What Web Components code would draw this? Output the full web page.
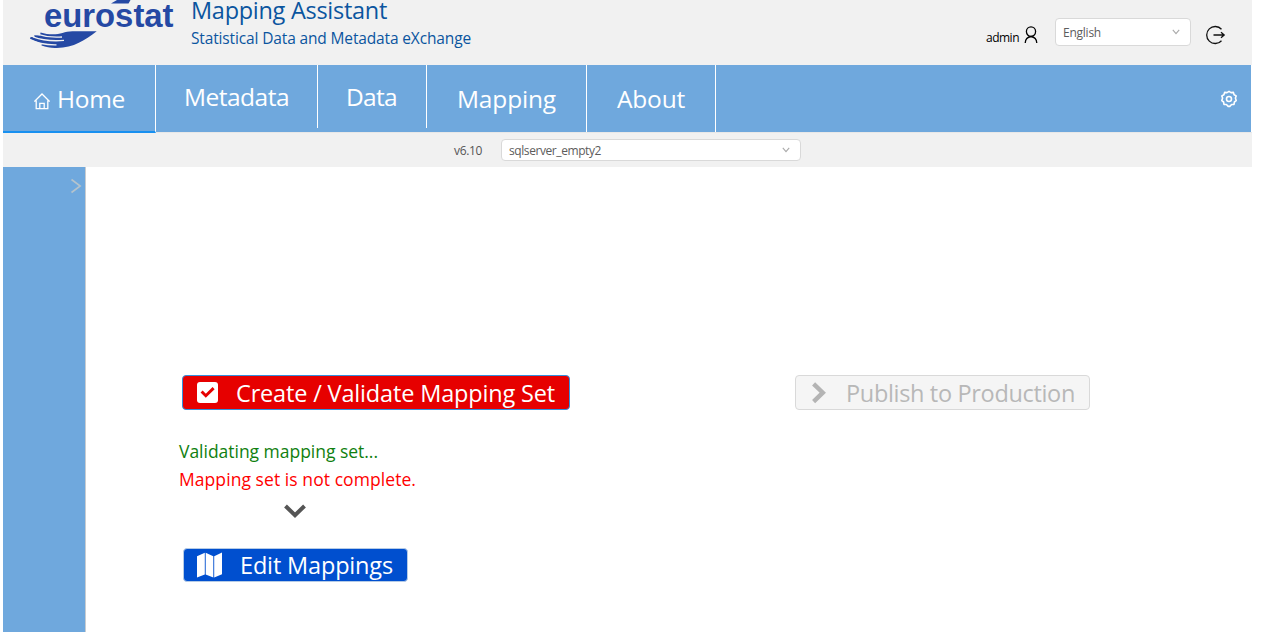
<!DOCTYPE html>
<html lang="en">
<head>
<meta charset="utf-8">
<title>Mapping Assistant</title>
<style>
html,body{margin:0;height:100%;overflow:hidden;background:#fff;font-family:"Open Sans","Noto Sans",sans-serif}
</style>
</head>
<body>
<ma-app></ma-app>
<script>
const define = (name, html, setup) => customElements.define(name, class extends HTMLElement {
  connectedCallback() {
    if (this.shadowRoot) return;
    const t = document.createElement('template');
    t.innerHTML = html;
    this.attachShadow({mode: 'open'}).append(t.content.cloneNode(true));
    if (setup) setup(this);
  }
});

/* One line of text, tracked so that it spans the requested width. */
define('fit-label', `<style>:host{display:block;flex:none;white-space:pre}span{display:inline-block}</style><span><slot></slot></span>`, el => {
  const span = el.shadowRoot.querySelector('span');
  const want = +el.getAttribute('span');
  const natural = span.getBoundingClientRect().width;
  const spacing = (want - natural) / el.textContent.length;
  span.style.letterSpacing = spacing.toFixed(3) + 'px';
  el.style.width = want + 'px';
});

const icons = {
  home: `<svg width="16" height="17" viewBox="0 0 16 17" fill="none" stroke="#fff" stroke-width="1.3"><path d="M.4 8.6 8 1l7.6 7.6M2.2 7.6v8h11.6v-8M5.8 15.6v-5.2h4.4v5.2"/></svg>`,
  user: `<svg width="14" height="18" viewBox="0 0 14 18" fill="none" stroke="#000" stroke-width="1.3"><ellipse cx="7" cy="5.6" rx="4.6" ry="4.7"/><path d="M1.2 17c.2-3.8 2.6-6 5.8-6.5 3.2.5 5.6 2.7 5.8 6.5"/></svg>`,
  exit: `<svg width="20" height="20" viewBox="0 0 20 20" fill="none" stroke="#111" stroke-width="1.3"><path d="M15.500 4.300A8.500 8.500 0 1 0 15.500 15.700M7.500 10H18M15 7.200 18.200 10 15 12.800"/></svg>`,
  gear: `<svg width="18" height="18" viewBox="0 0 18 18" fill="none" stroke="#fff" stroke-width="1.6" stroke-linejoin="round"><path d="M7 2.600 9 1.400l2 1.200 2.400-.2.700 2.300 2.100 1.200-.8 2.200L16.200 10.600l-1.800 1.400-.4 2.400-2.400.1L9.800 16.400H8.200l-1.800-1.900-2.400-.1-.4-2.400-1.800-1.400.8-2.500-.8-2.200 2.100-1.200.7-2.300z"/><circle cx="9" cy="9" r="2.500"/></svg>`,
  down: `<svg width="8" height="6" viewBox="0 0 8 6" fill="none" stroke="#aaa" stroke-width="1.1"><path d="M.8.8 4 4.7 7.2.8"/></svg>`,
  side: `<svg width="12" height="16" viewBox="0 0 12 16" fill="none" stroke="#b5c3cc" stroke-width="1.6"><path d="M1.5 1.5 10.200 8l-8.700 6.500"/></svg>`,
  check: `<svg width="21" height="21" viewBox="0 0 21 21"><rect width="21" height="21" rx="3" fill="#fff"/><path d="m4.600 9.500 4.200 4.300L16.600 6.100" fill="none" stroke="#e60000" stroke-width="2.900"/></svg>`,
  right: `<svg width="15" height="22" viewBox="0 0 15 22" fill="none" stroke="#b4b4b4" stroke-width="4.400"><path d="m1.600 1.800 9.200 8.900-9.200 8.900"/></svg>`,
  map: `<svg width="25" height="26" viewBox="0 0 25 26" fill="#fff"><path d="M0 4.200 7.800.8v21.600L0 25.400zM8.700.8l7.600 3.400v21.200l-7.600-3zM17.200 4.200 25 .6v21.600l-7.800 3.200z"/></svg>`,
  chevron: `<svg width="22" height="14" viewBox="0 0 22 14" fill="none" stroke="#555" stroke-width="4"><path d="m1.500 2 9.500 9.200L20.500 2"/></svg>`
};
define('ma-icon', `<style>:host,svg,span{display:block;flex:none}</style><span></span>`, el => {
  el.shadowRoot.querySelector('span').innerHTML = icons[el.getAttribute('name')];
});

define('ma-logo', `<style>:host,svg{display:block}</style>
<svg width="188" height="65" viewBox="3 0 188 65" fill="#2549a4">
<path d="M117 0h13.500l-2 3.500H111z"/>
<text x="44" y="26.500" font-family="Liberation Sans" font-weight="700" font-size="32.500" textLength="129.500" lengthAdjust="spacingAndGlyphs">eurostat</text>
<path d="M40.500 32.400c8 2.500 16 2.300 22 .6 3-1 6-1.800 10-1.800h24.200C85 40 73 48.500 55 47.900c-5-.2-9-1-13.500-2.500l.3-1.600-11.800-5 .6-1.800 4 .2-.4-1.900 5.900.2z"/>
<g fill="none" stroke="#f1f1f1" stroke-width="1.300"><path d="M38 34.300c8 2.700 14 3.500 24 2.700"/><path d="M33 36.900c10 3.800 19 4.500 31 3.500"/><path d="M29 39.700c9 4.200 17 5.400 27.500 5.200"/></g>
</svg>`);

define('ma-select', `<style>:host{display:flex;flex:none;align-items:center;justify-content:space-between;box-sizing:border-box;background:#fff;border:1px solid #d9d9d9;border-radius:4px;color:#5c5c5c;font-size:12px;line-height:18px;padding:0 10px 0 7px}::slotted(*){margin-top:2px}</style><slot></slot><ma-icon name="down"></ma-icon>`);

define('ma-header', `<style>
:host{display:flex;height:65px;background:#f1f1f1;color:#0b559f}
.titles{flex:1}.t{font-size:23.500px;line-height:30px;margin-top:-5px}.s{font-size:15.500px;line-height:22px;margin-top:2px}
.u{display:flex;color:#000;font-size:12px;line-height:18px;margin-top:29px;gap:5px}
.u ma-icon{margin-top:-3px}
ma-select{width:136px;height:28px;margin:18px 15px 0 17px}
.x{margin:25px 26px 0 0}
</style><ma-logo></ma-logo>
<div class="titles"><fit-label class="t" span="196">Mapping Assistant</fit-label><fit-label class="s" span="280">Statistical Data and Metadata eXchange</fit-label></div>
<div class="u"><fit-label span="33">admin</fit-label><ma-icon name="user"></ma-icon></div>
<ma-select><fit-label span="38">English</fit-label></ma-select>
<ma-icon class="x" name="exit"></ma-icon>`);

define('ma-tab', `<style>
:host{display:flex;flex:none;box-sizing:border-box;height:67px;padding:17px 0 0 28px;border-right:1px solid #fff;font-size:24.500px;line-height:34px;color:#fff}
:host([raised]){height:63px;padding-top:15px}
:host([active]){height:68px;border-bottom:2px solid #1890f0;padding-left:31px;gap:7px}
</style><slot></slot>`);

define('ma-nav', `<style>
:host{display:flex;align-items:flex-start;height:67px;width:1248px;background:#6fa8dd}
ma-icon.g{margin:25px 13px 0 auto}
</style>
<ma-tab active style="width:153px"><ma-icon name="home" style="margin-top:10.500px"></ma-icon><fit-label span="68">Home</fit-label></ma-tab>
<ma-tab raised style="width:162px"><fit-label span="105">Metadata</fit-label></ma-tab>
<ma-tab raised style="width:109px"><fit-label span="51">Data</fit-label></ma-tab>
<ma-tab style="width:160px;padding-left:30px"><fit-label span="99">Mapping</fit-label></ma-tab>
<ma-tab style="width:129px;padding-left:30px"><fit-label span="68">About</fit-label></ma-tab>
<ma-icon class="g" name="gear"></ma-icon>`);

define('ma-store-bar', `<style>
:host{display:flex;box-sizing:border-box;height:35px;background:#f1f1f1;border-top:1px solid #e8e8e8;padding:6px 0 0 451px;color:#555;font-size:12px;line-height:18px}
ma-select{width:300px;height:22px;margin-left:19px}
.v{margin-top:3px}
</style><fit-label class="v" span="28">v6.10</fit-label><ma-select><fit-label span="92">sqlserver_empty2</fit-label></ma-select>`);

define('ma-button', `<style>
:host{display:flex;align-items:center;box-sizing:border-box;border:1px solid #d9d9d9;border-radius:4px;font-size:23.500px;line-height:32px;color:#fff}
:host([kind=danger]){background:#e60000;border-color:#3390dd}
:host([kind=primary]){background:#004fcf;border-color:#b5cbe6}
:host([kind=off]){background:#f5f5f5;color:#b8b8b8}
</style><slot></slot>`);

define('ma-flow', `<style>
:host{display:flex;align-items:flex-start;padding:208px 0 0 93px}
.steps{width:616px}
.a{width:388px;height:35px;margin-left:3px;padding-left:14px;gap:18px}
.p{width:295px;height:35px;padding-left:16px;gap:19px}
.e{width:225px;height:34px;margin:30px 0 0 4px;padding-left:13px;gap:18px}
.m{font-size:17.500px;line-height:28px}.ok{color:#108010;margin-top:27px}.bad{color:#f00}
.c{margin:11px 0 0 105px}
</style>
<div class="steps">
<ma-button class="a" kind="danger"><ma-icon name="check"></ma-icon><fit-label span="319">Create / Validate Mapping Set</fit-label></ma-button>
<fit-label class="m ok" span="199">Validating mapping set...</fit-label>
<fit-label class="m bad" span="237">Mapping set is not complete.</fit-label>
<ma-icon class="c" name="chevron"></ma-icon>
<ma-button class="e" kind="primary"><ma-icon name="map"></ma-icon><fit-label span="153">Edit Mappings</fit-label></ma-button>
</div>
<ma-button class="p" kind="off"><ma-icon name="right"></ma-icon><fit-label span="229">Publish to Production</fit-label></ma-button>`);

define('ma-sidebar', `<style>:host{display:flex;justify-content:flex-end;box-sizing:border-box;width:83px;height:465px;background:#6fa8dd;border-right:1px solid #c8ccd0;padding:11px 3px 0 0}</style><ma-icon name="side"></ma-icon>`);

define('ma-app', `<style>:host{display:block;width:1249px;margin-left:3px}.body{display:flex}ma-flow{flex:1}</style>
<ma-header></ma-header><ma-nav></ma-nav><ma-store-bar></ma-store-bar>
<div class="body"><ma-sidebar></ma-sidebar><ma-flow></ma-flow></div>`);
</script>
</body>
</html>
